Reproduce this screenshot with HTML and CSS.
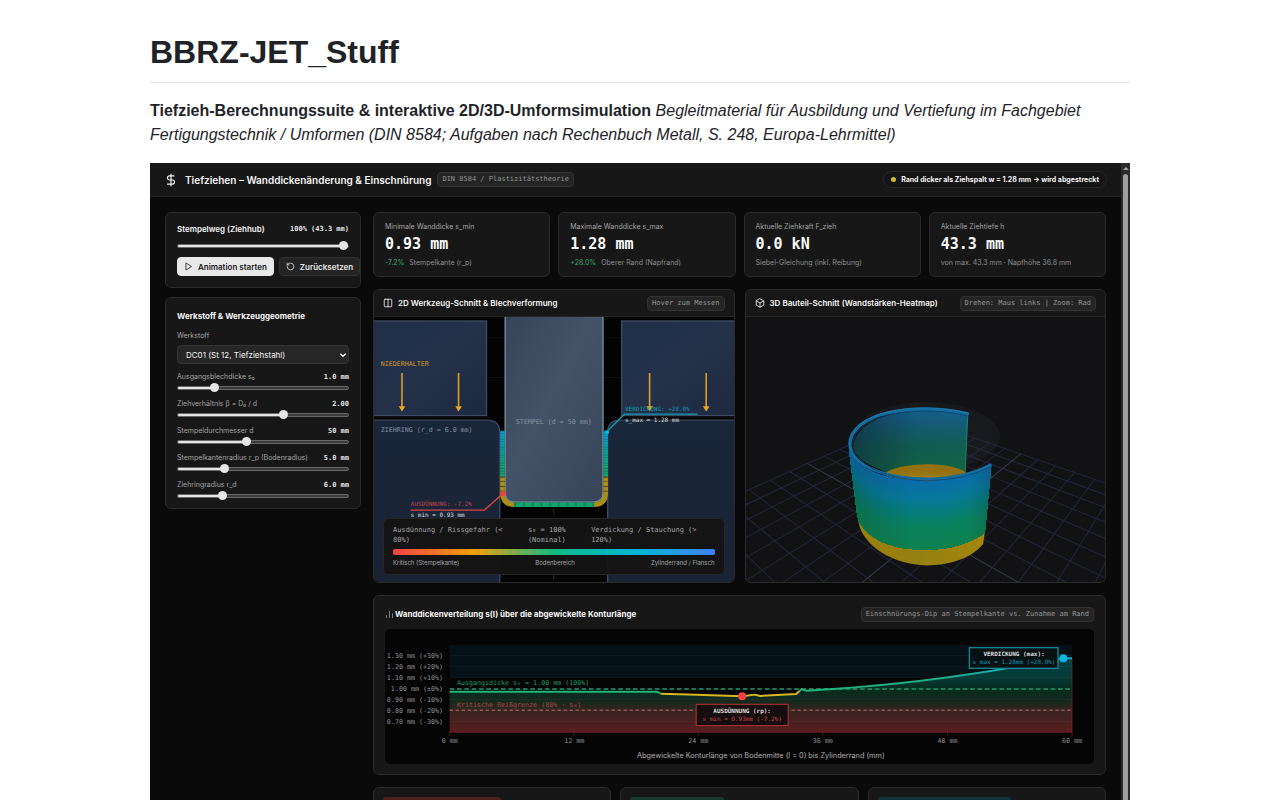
FILE: index.html
```html
<!DOCTYPE html>
<html lang="de">
<head>
<meta charset="utf-8">
<title>BBRZ-JET_Stuff</title>
<link rel="stylesheet" href="styles.css">
</head>
<body>
<article class="readme">
  <h1 class="readme-title">BBRZ-JET_Stuff</h1>
  <p class="readme-intro"><strong>Tiefzieh-Berechnungssuite &amp; interaktive 2D/3D-Umformsimulation</strong> <em>Begleitmaterial für Ausbildung und Vertiefung im Fachgebiet Fertigungstechnik / Umformen (DIN 8584; Aufgaben nach Rechenbuch Metall, S. 248, Europa-Lehrmittel)</em></p>

  <div class="app">
    <div class="app-main">
      <header class="app-header">
        <svg class="logo" viewBox="0 0 24 24" aria-hidden="true"><path d="M12 2v20M17 5H9.500a3.500 3.500 0 0 0 0 7h5a3.500 3.500 0 0 1 0 7H6"/></svg>
        <h2 class="app-title">Tiefziehen – Wanddickenänderung &amp; Einschnürung</h2>
        <span class="tag">DIN 8584 / Plastizitätstheorie</span>
        <span class="status"><i class="dot"></i>Rand dicker als Ziehspalt w = 1.28 mm → wird abgestreckt</span>
      </header>

      <div class="workspace">
        <aside class="sidebar">
          <section class="panel stroke-panel">
            <div class="field-head">
              <label class="stroke-label" for="hub">Stempelweg (Ziehhub)</label>
              <output class="value">100% (43.3 mm)</output>
            </div>
            <input class="slider" id="hub" type="range" min="0" max="100" value="100" style="--fill:100%">
            <div class="actions">
              <button class="btn btn-primary" type="button"><svg class="icon" viewBox="0 0 24 24" aria-hidden="true"><path d="M6 3l14 9-14 9z"/></svg>Animation starten</button>
              <button class="btn" type="button"><svg class="icon" viewBox="0 0 24 24" aria-hidden="true"><path d="M3 12a9 9 0 1 0 9-9 9.700 9.700 0 0 0-6.700 2.700L3 8M3 3v5h5"/></svg>Zurücksetzen</button>
            </div>
          </section>

          <section class="panel geometry-panel">
            <h3 class="section-title">Werkstoff &amp; Werkzeuggeometrie</h3>
            <label class="field-label" for="mat">Werkstoff</label>
            <div class="select-wrap">
              <select class="select" id="mat"><option>DC01 (St 12, Tiefziehstahl)</option></select>
              <svg class="chevron" viewBox="0 0 12 12" aria-hidden="true"><path d="M2 4l4 4 4-4"/></svg>
            </div>
            <div class="field">
              <div class="field-head"><label class="field-label" for="s0">Ausgangsblechdicke s₀</label><output class="value">1.0 mm</output></div>
              <input class="slider" id="s0" type="range" min="0" max="1000" value="197" style="--fill:21%">
            </div>
            <div class="field">
              <div class="field-head"><label class="field-label" for="beta">Ziehverhältnis β = D₀ / d</label><output class="value">2.00</output></div>
              <input class="slider" id="beta" type="range" min="0" max="1000" value="628" style="--fill:62%">
            </div>
            <div class="field">
              <div class="field-head"><label class="field-label" for="dia">Stempeldurchmesser d</label><output class="value">50 mm</output></div>
              <input class="slider" id="dia" type="range" min="0" max="1000" value="395" style="--fill:40%">
            </div>
            <div class="field">
              <div class="field-head"><label class="field-label" for="rp">Stempelkantenradius r_p (Bodenradius)</label><output class="value">5.0 mm</output></div>
              <input class="slider" id="rp" type="range" min="0" max="1000" value="258" style="--fill:27%">
            </div>
            <div class="field">
              <div class="field-head"><label class="field-label" for="rd">Ziehringradius r_d</label><output class="value">6.0 mm</output></div>
              <input class="slider" id="rd" type="range" min="0" max="1000" value="248" style="--fill:26%">
            </div>
          </section>
        </aside>

        <main class="content">
          <div class="metrics">
            <section class="panel metric">
              <span class="metric-name">Minimale Wanddicke s_min</span>
              <strong class="metric-value">0.93 mm</strong>
              <span class="metric-note"><b class="delta">-7.2%</b>Stempelkante (r_p)</span>
            </section>
            <section class="panel metric">
              <span class="metric-name">Maximale Wanddicke s_max</span>
              <strong class="metric-value">1.28 mm</strong>
              <span class="metric-note"><b class="delta">+28.0%</b>Oberer Rand (Napfrand)</span>
            </section>
            <section class="panel metric">
              <span class="metric-name">Aktuelle Ziehkraft F_zieh</span>
              <strong class="metric-value">0.0 kN</strong>
              <span class="metric-note">Siebel-Gleichung (inkl. Reibung)</span>
            </section>
            <section class="panel metric">
              <span class="metric-name">Aktuelle Ziehtiefe h</span>
              <strong class="metric-value">43.3 mm</strong>
              <span class="metric-note">von max. 43.3 mm · Napfhöhe 36.8 mm</span>
            </section>
          </div>

          <div class="views">
            <section class="panel view">
              <div class="view-head">
                <svg class="icon view-icon" viewBox="0 0 24 24" aria-hidden="true"><rect x="3" y="3" width="18" height="18" rx="2"/><path d="M12 3v18"/></svg>
                <h3 class="view-title">2D Werkzeug-Schnitt &amp; Blechverformung</h3>
                <span class="tag">Hover zum Messen</span>
              </div>
              <div class="stage">
                <svg class="drawing" viewBox="0 0 540 398">
                  <defs>
                    <linearGradient id="holder" x1="0" y1="0" x2="1" y2="1"><stop offset="0" stop-color="#202f49"/><stop offset=".5" stop-color="#233149"/><stop offset="1" stop-color="#1d2940"/></linearGradient>
                    <linearGradient id="die" x1="0" y1="0" x2="0" y2="1"><stop offset="0" stop-color="#1a263a"/><stop offset="1" stop-color="#1a2334"/></linearGradient>
                    <linearGradient id="punch" x1="0" y1="0" x2="1" y2="1"><stop offset="0" stop-color="#364458"/><stop offset=".45" stop-color="#455368"/><stop offset="1" stop-color="#364458"/></linearGradient>
                    <linearGradient id="wall" gradientUnits="userSpaceOnUse" x1="0" y1="171" x2="0" y2="252"><stop offset="0" stop-color="#0e9fd0"/><stop offset=".3" stop-color="#0d9fae"/><stop offset=".6" stop-color="#12a579"/><stop offset="1" stop-color="#12a066"/></linearGradient>
                  </defs>
                  <rect width="541" height="398" fill="#030304"/>
                  <path d="M0 31H541M0 91H541M0 151H541M0 331H541M0 391H541" stroke="#101013"/>
                  <rect x="-2" y="6" width="171" height="142" fill="url(#holder)" stroke="#3c4b63" stroke-width="2"/>
                  <rect x="372" y="6" width="175" height="142" fill="url(#holder)" stroke="#3c4b63" stroke-width="2"/>
                  <path d="M-2 155H170Q189 155 189 174V402H-2Z" fill="url(#die)" stroke="#3c495c" stroke-width="2"/>
                  <path d="M545 155H370Q351 155 351 174V402H545Z" fill="url(#die)" stroke="#3c495c" stroke-width="2"/>
                  <path d="M270 288V398" stroke="#404040" stroke-dasharray="9 5"/>
                  <path d="M197 -3V264Q197 278 211 278H329Q344 278 344 264V-3Z" fill="url(#punch)" stroke="#7f8da3" stroke-width="2"/>
                  <g fill="none" stroke-width="7">
                    <path d="M193 171V241M348 171V241" stroke="url(#wall)"/>
                    <path d="M193 171V241M348 171V241" stroke="#04151a" stroke-opacity=".35" stroke-dasharray="1 3"/>
                    <path d="M193 240V264Q193 282 211 282M348 240V264Q348 282 330 282" stroke="#a98e18"/>
                    <path d="M193 240V262M348 240V262" stroke="#352d09" stroke-dasharray="1 6"/>
                    <path d="M211 282H330" stroke="#12a46f"/>
                    <path d="M211 282H330" stroke="#0c8a57" stroke-dasharray="3 10"/>
                  </g>
                  <g stroke="#d99a27" stroke-width="2.500" fill="#eda51e">
                    <path d="M42 84V137M127 84V137M414 84V137M499 84V137"/>
                    <path stroke="none" d="M37 134h10l-5 8zM122 134h10l-5 8zM409 134h10l-5 8zM494 134h10l-5 8z"/>
                  </g>
                  <text class="draw-text amber" x="10" y="73">NIEDERHALTER</text>
                  <text class="draw-text slate" x="10" y="173">ZIEHRING (r_d = 6.0 mm)</text>
                  <text class="draw-text slate middle" x="270" y="160">STEMPEL (d = 50 mm)</text>
                  <path d="M55 290H166L193 266" fill="none" stroke="#d84648" stroke-width="2"/>
                  <circle cx="194" cy="265" r="4" fill="#ef4444"/>
                  <text class="draw-text small red" x="55" y="284">AUSDÜNNUNG: -7.2%</text>
                  <text class="draw-text small light" x="55" y="301">s_min = 0.93 mm</text>
                  <path d="M486 146H376L351 171" fill="none" stroke="#109db6" stroke-width="2"/>
                  <circle cx="350" cy="173" r="3" fill="#09b5d8"/>
                  <text class="draw-text small cyan" x="377" y="141">VERDICKUNG: +28.0%</text>
                  <text class="draw-text small light" x="377" y="158">s_max = 1.28 mm</text>
                </svg>
                <div class="legend">
                  <div class="legend-row mono"><span>Ausdünnung / Rissgefahr (&lt;<br>80%)</span><span>s₀ = 100%<br>(Nominal)</span><span>Verdickung / Stauchung (&gt;<br>120%)</span></div>
                  <div class="legend-bar"></div>
                  <div class="legend-row"><span>Kritisch (Stempelkante)</span><span>Bodenbereich</span><span>Zylinderrand / Flansch</span></div>
                </div>
              </div>
            </section>

            <section class="panel view">
              <div class="view-head">
                <svg class="icon view-icon" viewBox="0 0 24 24" aria-hidden="true"><path d="M12 2l9 5v10l-9 5-9-5V7zM3 7l9 5 9-5M12 12v10"/></svg>
                <h3 class="view-title">3D Bauteil-Schnitt (Wandstärken-Heatmap)</h3>
                <span class="tag">Drehen: Maus links | Zoom: Rad</span>
              </div>
              <div class="stage">
                <svg class="drawing" viewBox="18 97 1078 794">
                  <defs>
                    <linearGradient id="inside" x1="0" y1="0" x2="0" y2="1"><stop offset="0" stop-color="#14618f"/><stop offset=".2" stop-color="#155c7a"/><stop offset=".55" stop-color="#125e50"/><stop offset="1" stop-color="#14683f"/></linearGradient>
                    <linearGradient id="shadeIn" x1="0" x2="1"><stop offset="0" stop-color="#0c1c33" stop-opacity=".5"/><stop offset=".55" stop-color="#0c1c33" stop-opacity=".05"/><stop offset="1" stop-color="#0c1c33" stop-opacity="0"/></linearGradient>
                    <linearGradient id="shadeOut" x1="0" x2="1"><stop offset="0" stop-color="#102030" stop-opacity=".2"/><stop offset=".45" stop-color="#102030" stop-opacity="0"/><stop offset=".85" stop-color="#102030" stop-opacity="0"/><stop offset="1" stop-color="#102030" stop-opacity=".2"/></linearGradient>
                    <radialGradient id="floor" cx=".5" cy=".95" r=".55"><stop offset="0" stop-color="#c9a52e"/><stop offset=".3" stop-color="#a27e13"/><stop offset="1" stop-color="#94700f"/></radialGradient>
                    <linearGradient id="band" x1="0" x2="1"><stop offset="0" stop-color="#9b7e0e"/><stop offset=".5" stop-color="#95800f"/><stop offset="1" stop-color="#a3870d"/></linearGradient>
                  </defs>
                  <rect x="18" y="97" width="1078" height="796" fill="#121214"/>
                  <g id="grid" fill="none"></g>
                  <g transform="translate(270 315)">
                    <ellipse cx="290" cy="140" rx="220" ry="103" fill="#2a2e36" fill-opacity=".25"/>
                    <path d="M413 72L405 258C300 275 150 270 75 190C50 110 180 58 290 58Q360 58 413 72Z" fill="url(#inside)"/>
                    <path d="M413 72L405 258C300 275 150 270 75 190C50 110 180 58 290 58Q360 58 413 72Z" fill="url(#shadeIn)"/>
                    <path d="M160 254C200 218 350 212 405 246V256Q340 275 290 274Q220 274 160 254Z" fill="url(#floor)"/>
                    <path d="M413 74L405 252" stroke="#17886b" stroke-width="3"/>
                    <path d="M82 375C105 445 190 478 290 478C360 478 420 460 464 428L459 463C420 510 350 527 290 527C190 525 100 470 86 400Z" fill="url(#band)"/>
                    <g id="shell"></g>
                    <path d="M55 165C70 245 180 272 290 272C370 272 440 250 484 224L464 430C420 462 360 480 290 480C190 480 105 450 82 380Z" fill="url(#shadeOut)"/>
                    <path d="M413 72C250 35 60 70 60 165C64 235 185 268 290 268Q405 266 480 226" fill="none" stroke="#146d9f" stroke-width="9" stroke-linecap="round"/>
                    <path d="M413 79C270 42 70 75 69 160C70 232 185 271 290 273Q405 270 480 232" fill="none" stroke="#07406c" stroke-width="2"/>
                    <path d="M413 69C250 31 55 68 56 165" fill="none" stroke="#2384b5" stroke-width="2"/>
                  </g>
                </svg>
              </div>
            </section>
          </div>

          <section class="panel chart-panel">
            <div class="chart-head">
              <svg class="icon bars" viewBox="0 0 24 24" aria-hidden="true"><path d="M4 20v-5M12 20V4M20 20V10"/></svg>
              <h3 class="chart-title">Wanddickenverteilung s(l) über die abgewickelte Konturlänge</h3>
              <span class="tag">Einschnürungs-Dip an Stempelkante vs. Zunahme am Rand</span>
            </div>
            <svg class="chart" viewBox="0 0 1064 202">
              <defs>
                <linearGradient id="area" gradientUnits="userSpaceOnUse" x1="0" y1="43" x2="0" y2="155"><stop offset="0" stop-color="#06424a"/><stop offset=".28" stop-color="#053a35"/><stop offset=".42" stop-color="#052c20"/><stop offset=".6" stop-color="#17291c"/><stop offset=".72" stop-color="#3a2420"/><stop offset=".85" stop-color="#482021"/><stop offset="1" stop-color="#5c1d1d"/></linearGradient>
                <linearGradient id="line" gradientUnits="userSpaceOnUse" x1="632" y1="0" x2="1031" y2="0"><stop offset="0" stop-color="#22b47b"/><stop offset=".5" stop-color="#20ad89"/><stop offset="1" stop-color="#11abcf"/></linearGradient>
              </defs>
              <rect x="97" y="24" width="934" height="49" fill="#041218"/>
              <path d="M97 94H408L414 97L468 98.500L536 101L555 98.500L563 100.500L617 97.500L625 90.500L632 92.500L672 90Q830 80 1018 44H1031V155H97Z" fill="url(#area)"/>
              <path d="M97 40H1031M97 56H1031M97 73H1031M97 106H1031M97 122H1031M97 139H1031" stroke="#ffffff" stroke-opacity=".07"/>
              <path d="M97 90H1031" stroke="#229a6c" stroke-width="2" stroke-dasharray="7 4"/>
              <path d="M97 122H1031" stroke="#955550" stroke-width="2" stroke-dasharray="5 4"/>
              <path d="M97 155H1031M1031 44V160M97 155v5M284 155v5M470 155v5M657 155v5M844 155v5" stroke="#842525" fill="none"/>
              <g fill="none" stroke-width="3" stroke-linejoin="round">
                <path d="M97 94H408L414 97" stroke="#20b77a"/>
                <path d="M414 97L468 98.500L536 101L555 98.500L563 100.500L617 97.500L622 93" stroke="#d6b722"/>
                <path d="M622 93L625 90.500L632 92.500L672 90Q830 80 1018 44H1031" stroke="url(#line)"/>
              </g>
              <circle cx="536" cy="101" r="6" fill="#ef4444"/>
              <circle cx="1018" cy="44" r="6" fill="#08b5df"/>
              <g class="draw-text axis end">
                <text x="87" y="43">1.30 mm (+30%)</text>
                <text x="87" y="60">1.20 mm (+20%)</text>
                <text x="87" y="76">1.10 mm (+10%)</text>
                <text x="87" y="93">1.00 mm (±0%)</text>
                <text x="87" y="109">0.90 mm (-10%)</text>
                <text x="87" y="126">0.80 mm (-20%)</text>
                <text x="87" y="142">0.70 mm (-30%)</text>
              </g>
              <g class="draw-text axis middle">
                <text x="97" y="171">0 mm</text>
                <text x="284" y="171">12 mm</text>
                <text x="470" y="171">24 mm</text>
                <text x="657" y="171">36 mm</text>
                <text x="844" y="171">48 mm</text>
                <text x="1031" y="171">60 mm</text>
              </g>
              <text class="draw-text green" x="108" y="84">Ausgangsdicke s₀ = 1.00 mm (100%)</text>
              <text class="draw-text rust" x="108" y="117">Kritische Reißgrenze (80% · s₀)</text>
              <rect x="467" y="113" width="138" height="32" fill="#160d0e" stroke="#b03538" stroke-width="1.500"/>
              <text class="draw-text small bold middle light" x="536" y="126">AUSDÜNNUNG (rp):</text>
              <text class="draw-text small middle red" x="536" y="138">s_min = 0.93mm (-7.2%)</text>
              <rect x="877" y="28" width="133" height="31" fill="#071113" stroke="#148593" stroke-width="2"/>
              <text class="draw-text small bold middle light" x="944" y="41">VERDICKUNG (max):</text>
              <text class="draw-text small middle cyan" x="944" y="53">s_max = 1.28mm (+28.0%)</text>
              <text class="axis-title middle" x="564" y="193">Abgewickelte Konturlänge von Bodenmitte (l = 0) bis Zylinderrand (mm)</text>
            </svg>
          </section>

          <div class="cards">
            <section class="panel card"><div class="card-mark mark-red"></div></section>
            <section class="panel card"><div class="card-mark mark-green"></div></section>
            <section class="panel card"><div class="card-mark mark-cyan"></div></section>
          </div>
        </main>
      </div>
    </div>
    <div class="scrollbar" aria-hidden="true"><span class="scroll-up"></span><span class="scroll-thumb"></span></div>
  </div>
</article>
<script src="scene.js"></script>
</body>
</html>
```

FILE: styles.css
```css
* { box-sizing: border-box; }

body {
  margin: 0;
  height: 100vh;
  overflow: hidden;
  background: #fff;
  color: #1f2328;
  font: 16px/24px "Liberation Sans", Arial, sans-serif;
}

h1, h2, h3, p { margin: 0; }

.readme { max-width: 980px; margin: 0 auto; padding-top: 32px; }
.readme-title { font-size: 32px; line-height: 40px; padding-bottom: 10px; border-bottom: 1px solid #e2e5e9; margin-bottom: 16px; }
.readme-intro { margin-bottom: 16px; }

.app { display: flex; background: #0a0a0a; color: #f5f5f5; font: 7px/10px Inter, sans-serif; }
.app-main { flex: 1; min-width: 0; }

.app-header { display: flex; align-items: center; height: 34px; padding: 0 14px; background: #171717; border-bottom: 1px solid #202020; }
.logo { width: 14px; height: 14px; margin-right: 7px; fill: none; stroke: #f5f5f5; stroke-width: 2; stroke-linecap: round; stroke-linejoin: round; }
.app-title { font-size: 10px; line-height: 14px; font-weight: 600; margin-right: 6px; white-space: nowrap; }

.tag { height: 15px; padding: 0 4px; border: 1px solid #333; border-radius: 4px; background: #242424; color: #969696; font: 7px/13px "DejaVu Sans Mono", monospace; white-space: nowrap; }
.status { display: flex; align-items: center; height: 17px; margin-left: auto; padding: 0 7px; border: 1px solid #282828; border-radius: 9px; background: #141414; font-weight: 700; white-space: nowrap; }
.dot { width: 5px; height: 5px; margin-right: 5px; border-radius: 50%; background: #d9b52f; }

.workspace { display: grid; grid-template-columns: 196px minmax(0, 1fr); gap: 12px; padding: 15px; }
.sidebar { display: flex; flex-direction: column; gap: 9px; }
.content { display: flex; flex-direction: column; gap: 12px; }
.panel { background: #171717; border: 1px solid #2a2a2a; border-radius: 6px; }

.stroke-panel { padding: 10px 11px 11px; height: 76px; }
.field-head { display: flex; justify-content: space-between; align-items: center; height: 12px; }
.geometry-panel { padding: 12px 11px 7px; }
.stroke-label { font-size: 8px; font-weight: 600; }
.value { font: bold 7px/10px "DejaVu Sans Mono", monospace; color: #e5e5e5; }
.field-label { font-size: 7px; color: #a3a3a3; white-space: nowrap; }
.section-title { font-size: 8px; line-height: 12px; font-weight: 700; margin-bottom: 9px; }
.geometry-panel > .field-label { display: block; line-height: 10px; margin-bottom: 4px; }
.field { margin-top: 5px; }
.select-wrap { position: relative; margin-bottom: 7px; }
.select { display: block; width: 100%; height: 19px; padding: 0 8px; border: 1px solid #333; border-radius: 4px; background: #262626; color: #f5f5f5; font: 8px/16px Inter, sans-serif; appearance: none; }
.chevron { position: absolute; right: 2px; top: 6px; width: 8px; height: 8px; fill: none; stroke: #fff; stroke-width: 2; pointer-events: none; }

.slider { display: block; width: 100%; height: 10px; margin: 0; appearance: none; background: none; }
.slider::-webkit-slider-runnable-track { height: 4px; border: 1px solid #686868; border-radius: 2px; background: linear-gradient(to right, #e5e5e5 var(--fill), #3a3a3a var(--fill)) border-box; }
.slider::-webkit-slider-thumb { appearance: none; width: 9px; height: 9px; margin-top: -4px; border-radius: 50%; background: #e5e5e5; }
.stroke-panel .slider { margin: 6px 0; }

.actions { display: flex; gap: 5px; }
.btn { display: flex; flex: none; align-items: center; height: 19px; padding: 0 6px; gap: 5px; border: 1px solid #303030; border-radius: 4px; background: #242424; color: #e5e5e5; font: 600 8px/10px Inter, sans-serif; white-space: nowrap; }
.btn-primary { background: #e8e8e8; border-color: #e8e8e8; color: #171717; }
.icon { flex: none; width: 9px; height: 9px; fill: none; stroke: currentColor; stroke-width: 2; stroke-linecap: round; stroke-linejoin: round; }

.metrics { display: grid; grid-template-columns: repeat(4, minmax(0, 1fr)); gap: 8px; }
.metric { display: flex; flex-direction: column; height: 65px; padding: 9px 11px; }
.metric-name { color: #a3a3a3; }
.metric-value { font: bold 15px/20px "DejaVu Sans Mono", monospace; margin: 2px 0 4px; color: #fafafa; }
.metric-note { color: #8e8e8e; white-space: nowrap; }
.delta { margin-right: 5px; color: #35a66b; font-weight: 400; }

.views { display: grid; grid-template-columns: repeat(2, minmax(0, 1fr)); gap: 10px; }
.view { overflow: hidden; }
.view-head { display: flex; align-items: center; height: 27px; padding: 0 9px; border-bottom: 1px solid #262626; }
.view-icon { width: 10px; height: 10px; margin-right: 5px; }
.view-title { font-size: 8px; line-height: 12px; font-weight: 600; white-space: nowrap; }
.view-head .tag, .chart-head .tag { margin-left: auto; }
.stage { position: relative; }
.drawing { display: block; width: 100%; }

.legend { position: absolute; left: 9px; right: 9px; bottom: 7px; padding: 6px 9px; border: 1px solid #262626; border-radius: 6px; background: rgba(20, 20, 20, .95); color: #a3a3a3; font-size: 6px; }
.legend-row { display: flex; justify-content: space-between; }
.mono { padding-right: 18px; font: 7px/10px "DejaVu Sans Mono", monospace; }
.legend-bar { height: 6px; margin: 4px 0 3px; border-radius: 2px; background: linear-gradient(to right, #ef4444, #f59e0b 25%, #10b981 50%, #06b6d4 75%, #3b82f6); }

.draw-text { font: 10px "DejaVu Sans Mono", monospace; }
.small { font-size: 9px; }
.bold { font-weight: bold; }
.middle { text-anchor: middle; }
.end { text-anchor: end; }
.amber { fill: #d99a27; }
.slate { fill: #8793a5; }
.red { fill: #c94347; }
.cyan { fill: #159aaf; }
.light { fill: #dedede; }
.green { fill: #1d9a68; }
.rust { fill: #a64a47; }
.axis { fill: #929292; }
.axis-title { font: 11px Inter, sans-serif; fill: #b0b0b0; }

.chart-panel { padding: 11px 11px 10px; }
.chart-head { display: flex; align-items: center; height: 15px; margin-bottom: 7px; }
.bars { margin-right: 1px; color: #a3a3a3; }
.chart-title { font-size: 8px; line-height: 12px; font-weight: 700; white-space: nowrap; }
.chart { display: block; width: 100%; border-radius: 5px; background: #050505; }

.cards { display: grid; grid-template-columns: repeat(3, minmax(0, 1fr)); gap: 9px; }
.card { padding: 9px; height: 80px; }
.card-mark { height: 15px; border-radius: 3px; }
.mark-red { width: 54%; background: #4a2020; }
.mark-green { width: 43%; background: #17382c; }
.mark-cyan { width: 61%; background: #12353c; }

.scrollbar { display: flex; flex-direction: column; align-items: center; width: 9px; background: #2b2b2b; }
.scroll-up { margin: 4px 0; border: 3px solid transparent; border-top: 0; border-bottom: 3px solid #a3a3a3; }
.scroll-thumb { flex: 1; width: 5px; border-radius: 3px 3px 0 0; background: #9f9f9f; }
```

FILE: scene.js
```js
const NS = "http://www.w3.org/2000/svg";

function addPath(parent, d, attrs) {
  const p = document.createElementNS(NS, "path");
  p.setAttribute("d", d);
  for (const k in attrs) p.setAttribute(k, attrs[k]);
  parent.appendChild(p);
}

// Floor grid: plane coordinates (s, t) in 0..2 projected to the view.
const origin = [519, 396], g = -0.1809, h = -0.2368;
const a = [842 * (1 + g) - origin[0], 507.5 * (1 + g) - origin[1]];
const b = [202.6 * (1 + h) - origin[0], 536.5 * (1 + h) - origin[1]];
function project(s, t) {
  const w = g * s + h * t + 1;
  return [0, 1].map(i => ((a[i] * s + b[i] * t + origin[i]) / w).toFixed(1)).join(" ");
}
const grid = document.getElementById("grid");
for (let i = 0; i <= 16; i++) {
  const k = i / 8;
  const style = { stroke: i === 8 ? "#363c4e" : "#222739", "stroke-width": 3 };
  addPath(grid, `M${project(k, 0)}L${project(k, 2)}`, style);
  addPath(grid, `M${project(0, k)}L${project(2, k)}`, style);
}

// Cup wall: strips blended from the rim curve down to the base band.
const rim = [55, 165, 70, 245, 180, 272, 290, 272, 370, 272, 440, 250, 484, 224];
const base = [82, 380, 105, 450, 190, 480, 290, 480, 360, 480, 420, 460, 464, 430];
const stops = [[0, [10, 108, 168]], [0.25, [7, 120, 154]], [0.45, [6, 124, 124]], [0.65, [10, 128, 94]], [1, [13, 130, 78]]];
function color(t) {
  let i = 1;
  while (stops[i][0] < t) i++;
  const [p, c] = stops[i - 1], [q, d] = stops[i];
  return `rgb(${c.map((v, j) => Math.round(v + (d[j] - v) * (t - p) / (q - p)))})`;
}
const shell = document.getElementById("shell");
const steps = 48;
for (let i = 0; i < steps; i++) {
  const t = i / steps;
  const m = rim.map((v, j) => v + (base[j] - v) * t);
  const n = base;
  addPath(shell,
    `M${m[0]} ${m[1]}C${m.slice(2, 8)}C${m.slice(8)}L${n[12]} ${n[13]}C${n[10]} ${n[11]} ${n[8]} ${n[9]} ${n[6]} ${n[7]}C${n[4]} ${n[5]} ${n[2]} ${n[3]} ${n[0]} ${n[1]}Z`,
    { fill: color(t) });
}
```
